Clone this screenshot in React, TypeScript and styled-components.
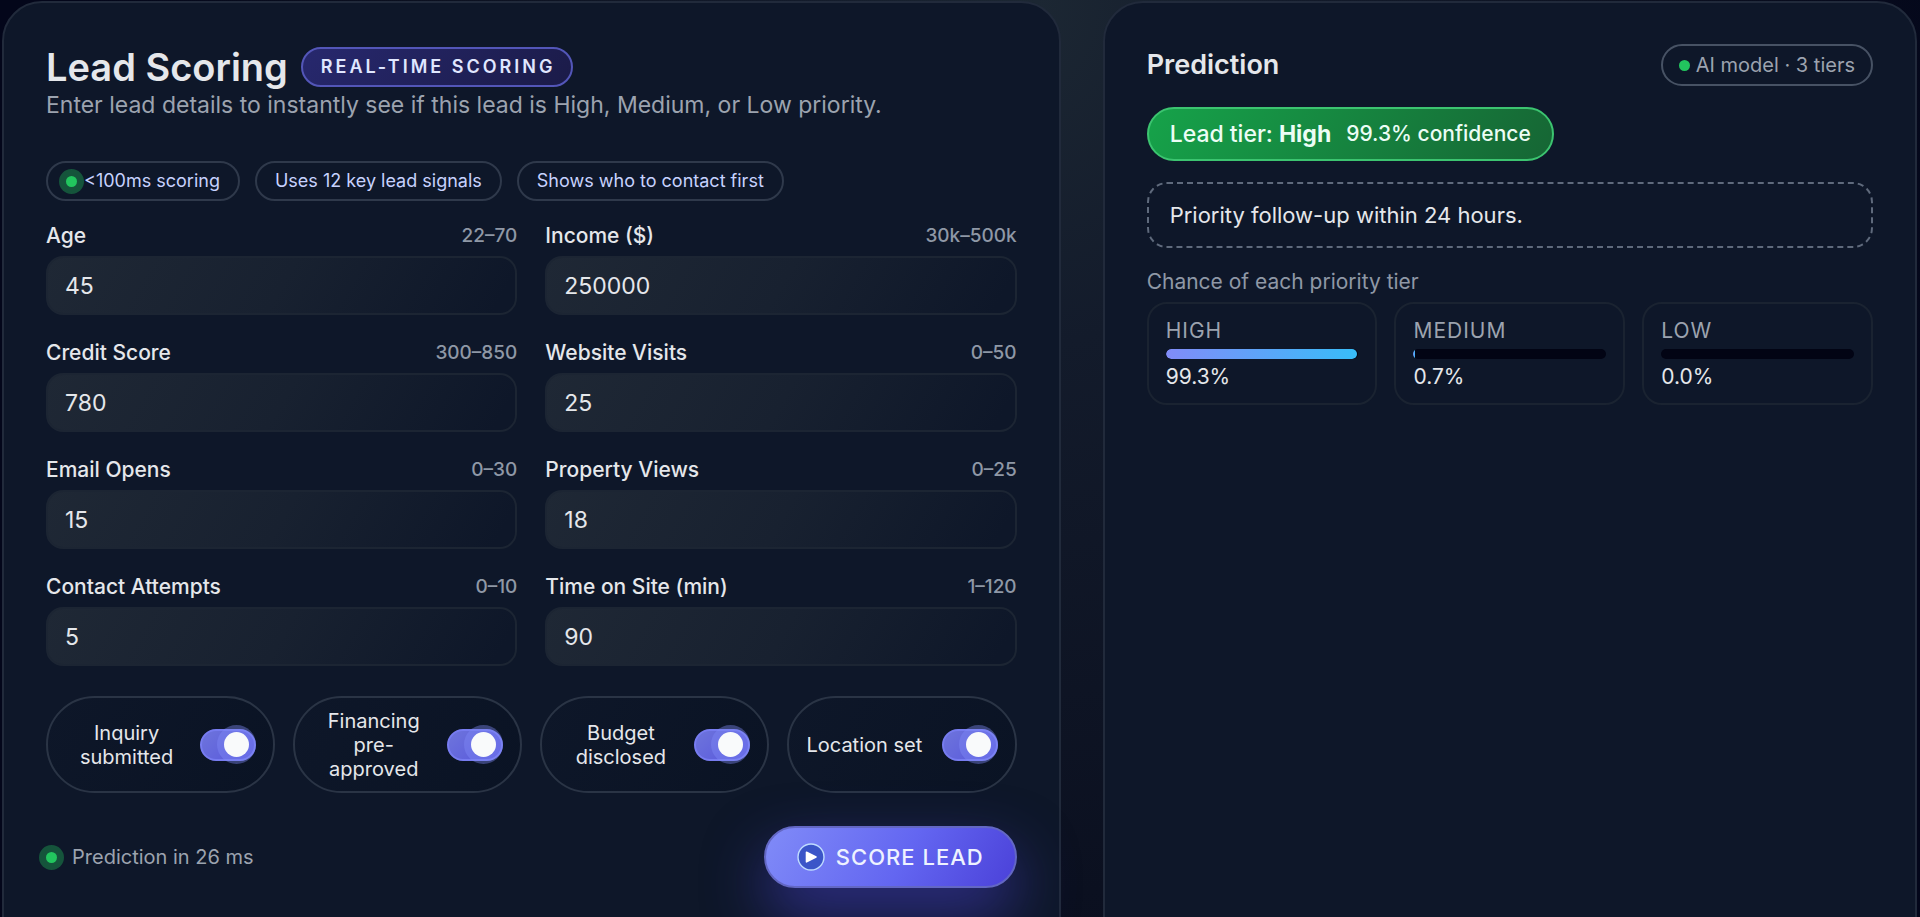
import React, { useState } from "react";
import styled, { createGlobalStyle } from "styled-components";

const GlobalStyle = createGlobalStyle`
  *, *::before, *::after { box-sizing: border-box; }
  body {
    margin: 0;
    background: #020617;
    color: #e5e7eb;
    font-family: Inter, "Liberation Sans", sans-serif;
    -webkit-font-smoothing: antialiased;
  }
  h1, h2, p { margin: 0; }
`;

const Page = styled.div`
  height: 100vh;
  overflow: hidden;
  padding: 1px 3px 0 2px;
  background: radial-gradient(ellipse 50% 150% at 54% 0, #1c2733 0, #131b2b 25%, #0b1020 65%, #03061a 100%);
`;

const Columns = styled.main`
  display: grid;
  grid-template-columns: 1.3fr 1fr;
  gap: 42px;
  min-height: calc(100vh + 48px);
`;

const Panel = styled.section`
  display: flex;
  flex-direction: column;
  min-width: 0;
  padding: 41px 42px;
  border: 2px solid #212a3b;
  border-radius: 40px;
  background: #0e1729;
`;

const TitleRow = styled.div`
  display: flex;
  align-items: center;
  gap: 13px;
  height: 46px;
`;

const Title = styled.h1`
  font-size: 38px;
  line-height: 46px;
  font-weight: 600;
`;

const LiveBadge = styled.span`
  padding: 0 16px 0 18px;
  border: 2px solid #5356b8;
  border-radius: 20px;
  background: linear-gradient(135deg, #27286e, #1b1b48);
  color: #e0e7ff;
  font-size: 18px;
  line-height: 36px;
  font-weight: 600;
  letter-spacing: 3px;
  text-transform: uppercase;
`;

const Subtitle = styled.p`
  margin-bottom: 41px;
  color: #9ca3af;
  font-size: 23px;
  line-height: 30px;
`;

const Chips = styled.div`
  display: flex;
  gap: 15px;
  margin-bottom: 22px;
`;

const Chip = styled.span`
  display: flex;
  align-items: center;
  padding: 0 18px;
  border: 2px solid #2f394b;
  border-radius: 20px;
  color: #c7d2fe;
  font-size: 18px;
  line-height: 36px;
`;

const ChipText = styled.span`
  margin-left: 7px;
`;

const Dot = styled.span<{ $halo?: boolean }>`
  flex: none;
  width: 11px;
  height: 11px;
  border-radius: 50%;
  background: #22c55e;
  box-shadow: ${(p) => (p.$halo ? "0 0 0 7px rgba(34, 197, 94, 0.35)" : "none")};
`;

const Fields = styled.div`
  display: grid;
  grid-template-columns: 1fr 1fr;
  gap: 25px 28px;
  margin-bottom: 30px;
`;

const FieldHead = styled.div`
  display: flex;
  align-items: center;
  justify-content: space-between;
  margin-bottom: 7px;
  line-height: 26px;
  font-weight: 500;
`;

const FieldLabel = styled.label`
  font-size: 21px;
`;

const Range = styled.span`
  color: #8f98a6;
  font-size: 19px;
`;

const NumberInput = styled.input`
  display: block;
  width: 100%;
  height: 59px;
  padding: 0 17px;
  border: 2px solid #1c2533;
  border-radius: 17px;
  outline: none;
  background: linear-gradient(120deg, #1f2835 0%, #182130 50%, #0e1729 95%) border-box;
  color: #e5e7eb;
  font: 400 23px Inter, "Liberation Sans", sans-serif;
  appearance: textfield;
  &::-webkit-inner-spin-button { appearance: none; margin: 0; }
`;

const Toggles = styled.div`
  display: grid;
  grid-template-columns: repeat(4, 1fr);
  gap: 18px;
  margin-bottom: 33px;
`;

const ToggleCard = styled.label`
  display: flex;
  align-items: center;
  justify-content: space-between;
  gap: 12px;
  min-height: 97px;
  padding: 0 17px;
  border: 2px solid #2a3445;
  border-radius: 49px;
  background: linear-gradient(120deg, #0e1729, #0a1324);
  font-size: 20px;
  line-height: 24px;
  text-align: center;
`;

const Switch = styled.input`
  flex: none;
  display: flex;
  align-items: center;
  justify-content: flex-start;
  appearance: none;
  width: 56px;
  height: 32px;
  margin: 0;
  padding: 0 5px;
  border: 2px solid #4b5563;
  border-radius: 16px;
  background: #111827;
  &::before {
    content: "";
    width: 25px;
    height: 25px;
    border-radius: 50%;
    background: #f9fafb;
  }
  &:checked {
    justify-content: flex-end;
    border-color: #777cf0;
    background: linear-gradient(135deg, #6f76dc, #5554dc) border-box;
  }
  &:checked::before {
    box-shadow: 0 0 0 7px rgba(129, 140, 248, 0.4);
  }
`;

const Footer = styled.div`
  display: flex;
  align-items: center;
  justify-content: space-between;
`;

const Status = styled.div`
  display: flex;
  align-items: center;
  gap: 15px;
  color: #9ca3af;
  font-size: 20px;
`;

const ScoreButton = styled.button`
  display: flex;
  align-items: center;
  gap: 11px;
  height: 62px;
  padding: 0 31px;
  border: 2px solid #6367c4;
  border-radius: 31px;
  background: linear-gradient(120deg, #818cf8, #6366f1 55%, #4a40d8) border-box;
  box-shadow: 0 26px 60px rgba(79, 70, 229, 0.5);
  color: #eef2ff;
  font: 500 22px Inter, "Liberation Sans", sans-serif;
  letter-spacing: 1px;
  text-transform: uppercase;
`;

const PredictionHead = styled.div`
  display: flex;
  align-items: center;
  justify-content: space-between;
  margin-bottom: 21px;
`;

const PredictionTitle = styled.h2`
  font-size: 27px;
  line-height: 32px;
  font-weight: 600;
`;

const ModelPill = styled.span`
  display: flex;
  align-items: center;
  gap: 6px;
  padding: 0 16px;
  border: 2px solid #475264;
  border-radius: 21px;
  color: #9ca3af;
  font-size: 20px;
  line-height: 38px;
`;

const TierPill = styled.div`
  display: flex;
  align-items: center;
  align-self: flex-start;
  gap: 15px;
  margin-bottom: 21px;
  padding: 0 21px;
  border: 2px solid #3cc470;
  border-radius: 27px;
  background: linear-gradient(120deg, #16a34a, #166534) border-box;
  color: #ecfdf5;
  font-size: 23px;
  line-height: 50px;
  font-weight: 500;
`;

const Confidence = styled.span`
  font-size: 21px;
`;

const Advice = styled.p`
  margin-bottom: 21px;
  padding: 0 21px;
  border: 2px dashed #5f6a7c;
  border-radius: 20px;
  color: #e5e7eb;
  font-size: 22px;
  line-height: 62px;
`;

const Caption = styled.p`
  margin-bottom: 7px;
  color: #8f98a6;
  font-size: 21px;
  line-height: 26px;
`;

const TierGrid = styled.div`
  display: grid;
  grid-template-columns: repeat(3, 1fr);
  gap: 17px;
`;

const TierCard = styled.div`
  display: flex;
  flex-direction: column;
  gap: 6px;
  padding: 14px 17px;
  border: 2px solid #1a2331;
  border-radius: 20px;
`;

const TierName = styled.span`
  color: #9ca3af;
  font-size: 21px;
  line-height: 25px;
  letter-spacing: 1px;
  text-transform: uppercase;
`;

const Track = styled.div`
  height: 10px;
  overflow: hidden;
  border-radius: 5px;
  background: #020414;
`;

const Fill = styled.div`
  height: 100%;
  border-radius: 5px;
  background: linear-gradient(90deg, #818cf8, #38bdf8);
`;

const TierValue = styled.span`
  font-size: 21px;
  line-height: 24px;
`;

const fields = [
  { id: "age", label: "Age", range: "22–70", value: 45 },
  { id: "income", label: "Income ($)", range: "30k–500k", value: 250000 },
  { id: "credit", label: "Credit Score", range: "300–850", value: 780 },
  { id: "visits", label: "Website Visits", range: "0–50", value: 25 },
  { id: "opens", label: "Email Opens", range: "0–30", value: 15 },
  { id: "views", label: "Property Views", range: "0–25", value: 18 },
  { id: "attempts", label: "Contact Attempts", range: "0–10", value: 5 },
  { id: "time", label: "Time on Site (min)", range: "1–120", value: 90 },
];

const toggles = ["Inquiry submitted", "Financing pre-approved", "Budget disclosed", "Location set"];

const tiers = [
  { name: "High", share: 99.3 },
  { name: "Medium", share: 0.7 },
  { name: "Low", share: 0 },
];

function PlayIcon() {
  return (
    <svg width="28" height="28" viewBox="0 0 28 28" aria-hidden="true">
      <circle cx="14" cy="14" r="13" fill="#3b55c8" stroke="#bfdbfe" strokeWidth="1.4" />
      <path d="M9.5 9.2 L19 14 L9.5 18.8 Z" fill="#fff" stroke="#fff" strokeWidth="1.6" strokeLinejoin="round" />
    </svg>
  );
}

export default function App() {
  const [checked, setChecked] = useState(toggles.map(() => true));
  const flip = (index: number) => setChecked(checked.map((on, i) => (i === index ? !on : on)));

  return (
    <Page>
      <GlobalStyle />
      <Columns>
        <Panel>
          <TitleRow>
            <Title>Lead Scoring</Title>
            <LiveBadge>Real-time scoring</LiveBadge>
          </TitleRow>
          <Subtitle>Enter lead details to instantly see if this lead is High, Medium, or Low priority.</Subtitle>
          <Chips>
            <Chip>
              <Dot $halo />
              <ChipText>&lt;100ms scoring</ChipText>
            </Chip>
            <Chip>Uses 12 key lead signals</Chip>
            <Chip>Shows who to contact first</Chip>
          </Chips>
          <Fields>
            {fields.map((f) => (
              <div key={f.id}>
                <FieldHead>
                  <FieldLabel htmlFor={f.id}>{f.label}</FieldLabel>
                  <Range>{f.range}</Range>
                </FieldHead>
                <NumberInput id={f.id} type="number" defaultValue={f.value} />
              </div>
            ))}
          </Fields>
          <Toggles>
            {toggles.map((text, i) => (
              <ToggleCard key={text}>
                <span>{text}</span>
                <Switch type="checkbox" checked={checked[i]} onChange={() => flip(i)} />
              </ToggleCard>
            ))}
          </Toggles>
          <Footer>
            <Status>
              <Dot $halo />
              Prediction in 26 ms
            </Status>
            <ScoreButton type="button">
              <PlayIcon />
              Score lead
            </ScoreButton>
          </Footer>
        </Panel>
        <Panel>
          <PredictionHead>
            <PredictionTitle>Prediction</PredictionTitle>
            <ModelPill>
              <Dot />
              AI model · 3 tiers
            </ModelPill>
          </PredictionHead>
          <TierPill>
            <span>
              Lead tier: <strong>High</strong>
            </span>
            <Confidence>99.3% confidence</Confidence>
          </TierPill>
          <Advice>Priority follow-up within 24 hours.</Advice>
          <Caption>Chance of each priority tier</Caption>
          <TierGrid>
            {tiers.map((t) => (
              <TierCard key={t.name}>
                <TierName>{t.name}</TierName>
                <Track>
                  <Fill style={{ width: `${t.share}%` }} />
                </Track>
                <TierValue>{t.share.toFixed(1)}%</TierValue>
              </TierCard>
            ))}
          </TierGrid>
        </Panel>
      </Columns>
    </Page>
  );
}
